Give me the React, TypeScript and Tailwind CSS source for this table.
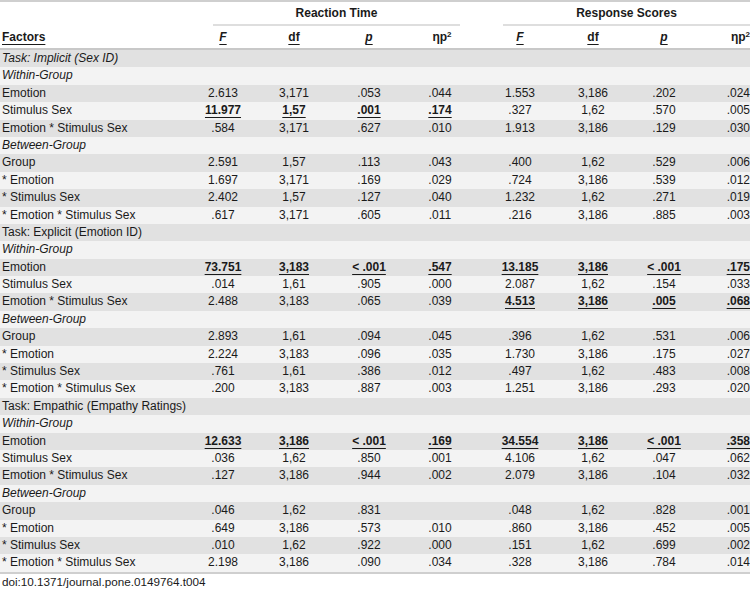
import React from 'react';

type Cell = string | [string, true];
type Row = { label: string; kind?: 'task' | 'sub' | 'taskItalic'; rt?: Cell[]; rs?: Cell[] };

const b = (v: string): [string, true] => [v, true];

const block = (
  task: string,
  italicTask: boolean,
  rows: [string, Cell[], Cell[]][][],
): Row[] => {
  const out: Row[] = [{ label: task, kind: italicTask ? 'taskItalic' : 'task' }];
  out.push({ label: 'Within-Group', kind: 'sub' });
  rows[0].forEach(([l, rt, rs]) => out.push({ label: l, rt, rs }));
  out.push({ label: 'Between-Group', kind: 'sub' });
  rows[1].forEach(([l, rt, rs]) => out.push({ label: l, rt, rs }));
  return out;
};

const ROWS: Row[] = [
  ...block('Task: Implicit (Sex ID)', true, [
    [
      ['Emotion', ['2.613', '3,171', '.053', '.044'], ['1.553', '3,186', '.202', '.024']],
      ['Stimulus Sex', [b('11.977'), b('1,57'), b('.001'), b('.174')], ['.327', '1,62', '.570', '.005']],
      ['Emotion * Stimulus Sex', ['.584', '3,171', '.627', '.010'], ['1.913', '3,186', '.129', '.030']],
    ],
    [
      ['Group', ['2.591', '1,57', '.113', '.043'], ['.400', '1,62', '.529', '.006']],
      ['* Emotion', ['1.697', '3,171', '.169', '.029'], ['.724', '3,186', '.539', '.012']],
      ['* Stimulus Sex', ['2.402', '1,57', '.127', '.040'], ['1.232', '1,62', '.271', '.019']],
      ['* Emotion * Stimulus Sex', ['.617', '3,171', '.605', '.011'], ['.216', '3,186', '.885', '.003']],
    ],
  ]),
  ...block('Task: Explicit (Emotion ID)', false, [
    [
      ['Emotion', [b('73.751'), b('3,183'), b('< .001'), b('.547')], [b('13.185'), b('3,186'), b('< .001'), b('.175')]],
      ['Stimulus Sex', ['.014', '1,61', '.905', '.000'], ['2.087', '1,62', '.154', '.033']],
      ['Emotion * Stimulus Sex', ['2.488', '3,183', '.065', '.039'], [b('4.513'), b('3,186'), b('.005'), b('.068')]],
    ],
    [
      ['Group', ['2.893', '1,61', '.094', '.045'], ['.396', '1,62', '.531', '.006']],
      ['* Emotion', ['2.224', '3,183', '.096', '.035'], ['1.730', '3,186', '.175', '.027']],
      ['* Stimulus Sex', ['.761', '1,61', '.386', '.012'], ['.497', '1,62', '.483', '.008']],
      ['* Emotion * Stimulus Sex', ['.200', '3,183', '.887', '.003'], ['1.251', '3,186', '.293', '.020']],
    ],
  ]),
  ...block('Task: Empathic (Empathy Ratings)', false, [
    [
      ['Emotion', [b('12.633'), b('3,186'), b('< .001'), b('.169')], [b('34.554'), b('3,186'), b('< .001'), b('.358')]],
      ['Stimulus Sex', ['.036', '1,62', '.850', '.001'], ['4.106', '1,62', '.047', '.062']],
      ['Emotion * Stimulus Sex', ['.127', '3,186', '.944', '.002'], ['2.079', '3,186', '.104', '.032']],
    ],
    [
      ['Group', ['.046', '1,62', '.831', ''], ['.048', '1,62', '.828', '.001']],
      ['* Emotion', ['.649', '3,186', '.573', '.010'], ['.860', '3,186', '.452', '.005']],
      ['* Stimulus Sex', ['.010', '1,62', '.922', '.000'], ['.151', '1,62', '.699', '.002']],
      ['* Emotion * Stimulus Sex', ['2.198', '3,186', '.090', '.034'], ['.328', '3,186', '.784', '.014']],
    ],
  ]),
];

// factors | F df p ηp² | F df p ηp²
const GRID = 'grid grid-cols-[188px_70px_72px_78px_64px_96px_50px_92px_40px]';
const ALIGN = ['text-center', 'text-center', 'text-center', 'text-center', 'text-center', 'text-center', 'text-center', 'text-right'];

function Val({ c, i }: { c: Cell; i: number }) {
  const bold = Array.isArray(c);
  const v = bold ? c[0] : c;
  return (
    <div className={`${ALIGN[i]} leading-[17.4px] whitespace-nowrap`}>
      {bold ? <span className="font-bold underline decoration-1 underline-offset-[3px]">{v}</span> : v}
    </div>
  );
}

export default function App() {
  return (
    <div
      className="w-[750px] h-[591px] bg-white text-[#1a1a1a] text-[12px]"
      style={{ fontFamily: '"Liberation Sans", Arial, sans-serif' }}
    >
      <div className="border-t-2 border-[#cfcfcf]" />
      <div className="flex h-[24px] font-bold">
        <div className="w-[213px]" />
        <div className="w-[247px] border-b-2 border-[#dedede] flex items-center justify-center">Reaction Time</div>
        <div className="w-[43px]" />
        <div className="flex-1 border-b-2 border-[#dedede] flex items-center justify-center">Response Scores</div>
      </div>
      <div className={`${GRID} h-[24px] items-center font-bold border-b-2 border-[#c8c8c8]`}>
        <div className="pl-[2px] underline decoration-1 underline-offset-[3px]">Factors</div>
        {[0, 1].map((g) => (
          <React.Fragment key={g}>
            <div className="text-center italic underline decoration-1 underline-offset-[3px]">F</div>
            <div className="text-center underline decoration-1 underline-offset-[3px]">df</div>
            <div className="text-center italic underline decoration-1 underline-offset-[3px]">p</div>
            <div className={g === 0 ? 'text-center pl-[4px]' : 'text-right'}>
              ηp<sup className="text-[8px]">2</sup>
            </div>
          </React.Fragment>
        ))}
      </div>
      <div className="border-b-2 border-[#cfcfcf]">
        {ROWS.map((r, idx) => {
          const bg = idx % 2 === 0 ? 'bg-[#e1e1e1]' : 'bg-[#f3f3f3]';
          if (!r.rt) {
            return (
              <div
                key={idx}
                className={`${bg} h-[17.4px] leading-[17.4px] pl-[2px] ${r.kind === 'task' ? '' : 'italic'}`}
              >
                {r.label}
              </div>
            );
          }
          return (
            <div key={idx} className={`${bg} ${GRID} h-[17.4px]`}>
              <div className="pl-[2px] leading-[17.4px] whitespace-nowrap">{r.label}</div>
              {r.rt.map((c, i) => (
                <Val key={i} c={c} i={i} />
              ))}
              {r.rs!.map((c, i) => (
                <Val key={i} c={c} i={i + 4} />
              ))}
            </div>
          );
        })}
      </div>
      <div className="pl-[2px] pt-[1px] text-[11.7px] leading-[14px]">doi:10.1371/journal.pone.0149764.t004</div>
    </div>
  );
}
